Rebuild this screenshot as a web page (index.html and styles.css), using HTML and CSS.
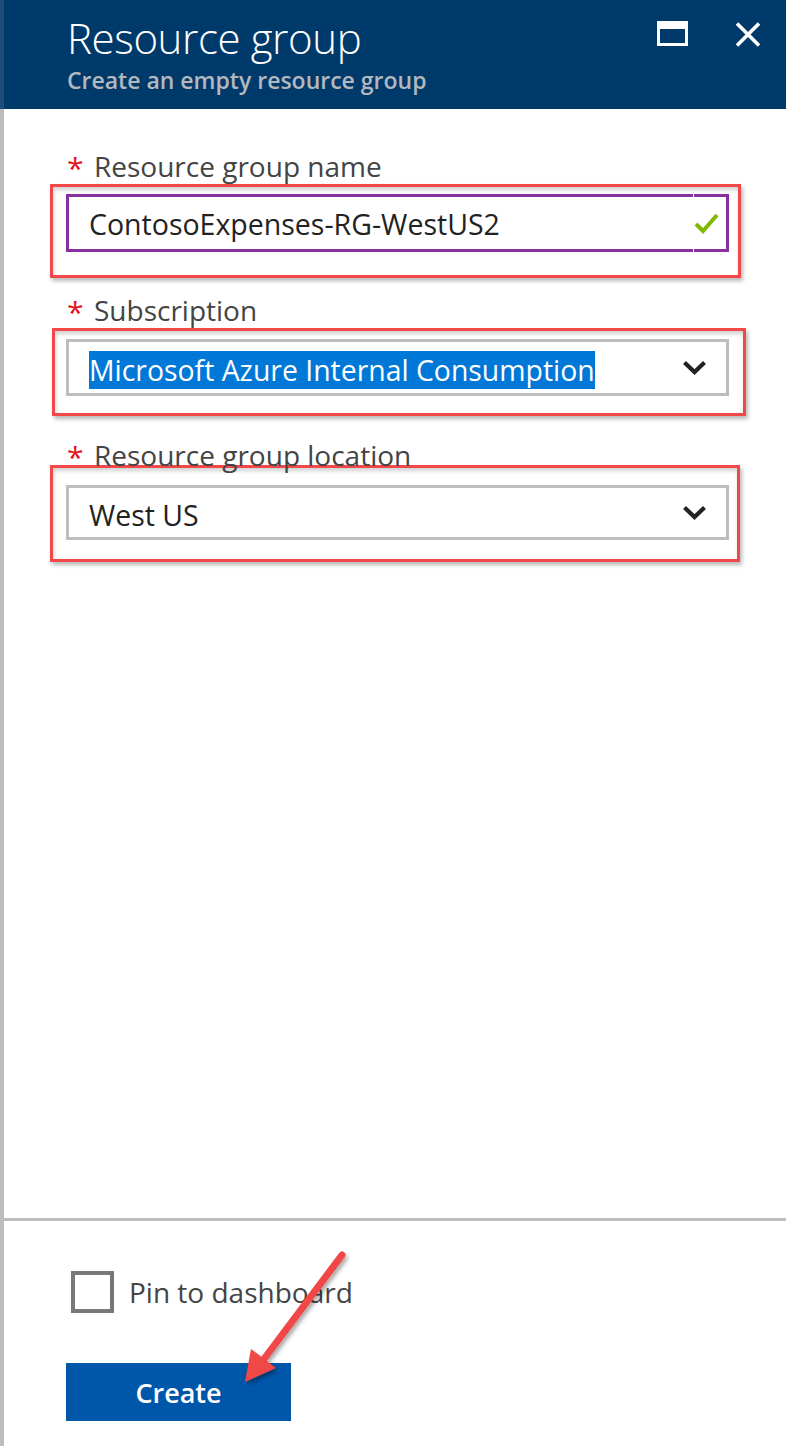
FILE: index.html
```html
<!DOCTYPE html>
<html lang="en">
<head>
<meta charset="utf-8">
<title>Resource group</title>
<link rel="stylesheet" href="styles.css">
</head>
<body>
<div class="blade">
  <header class="head">
    <div class="titles">
      <h1 class="title">Resource group</h1>
      <p class="subtitle">Create an empty resource group</p>
    </div>
    <div class="ctrls">
      <span class="maxbtn"></span>
      <svg class="closebtn" width="26" height="25" viewBox="0 0 26 25"><path d="M2 1.5 L24 23.5 M24 1.5 L2 23.5" stroke="#fff" stroke-width="3.6" fill="none"/></svg>
    </div>
  </header>
  <div class="content">
    <main class="form">
      <div class="label lbl1"><span class="req">*</span><span>Resource group name</span></div>
      <div class="hl hl1">
        <div class="input">
          <div class="inp-main">ContosoExpenses-RG-WestUS2</div>
          <div class="inp-check"><svg width="25" height="22" viewBox="0 0 25 22"><polyline points="2,12 9,19 23,3" fill="none" stroke="#7fba00" stroke-width="4"/></svg></div>
        </div>
      </div>
      <div class="label lbl2"><span class="req">*</span><span>Subscription</span></div>
      <div class="hl hl2">
        <div class="select"><span class="sel-text sel-hi">Microsoft Azure Internal Consumption</span>
          <svg class="chev" width="25" height="15" viewBox="0 0 25 15"><polyline points="2.5,2.5 12.5,12 22.5,2.5" fill="none" stroke="#222" stroke-width="4.2"/></svg>
        </div>
      </div>
      <div class="label lbl3"><span class="req">*</span><span>Resource group location</span></div>
      <div class="hl hl3">
        <div class="select sel3"><span class="sel-text">West US</span>
          <svg class="chev" width="25" height="15" viewBox="0 0 25 15"><polyline points="2.5,2.5 12.5,12 22.5,2.5" fill="none" stroke="#222" stroke-width="4.2"/></svg>
        </div>
      </div>
    </main>
    <footer class="foot">
      <label class="pin"><span class="cb"></span><span>Pin to dashboard</span></label>
      <button class="create">Create</button>
    </footer>
  </div>
  <svg class="arrow" width="140" height="160" viewBox="0 0 140 160">
    <defs>
      <filter id="sh" x="-30%" y="-30%" width="160%" height="160%">
        <feDropShadow dx="2" dy="3" stdDeviation="2" flood-color="#000" flood-opacity="0.35"/>
      </filter>
    </defs>
    <g filter="url(#sh)">
      <line x1="112" y1="15" x2="31" y2="123" stroke="#f04646" stroke-width="7" stroke-linecap="round"/>
      <polygon points="15,142 21,109 46,128" fill="#f04646"/>
    </g>
  </svg>
</div>
</body>
</html>
```
FILE: styles.css
```css
* { box-sizing: border-box; }
html, body { margin: 0; padding: 0; background: #fff; }
body { font-family: "Open Sans", "Noto Sans", sans-serif; color: #444; }

.blade {
  position: relative;
  width: 786px;
  height: 1446px;
  display: flex;
  flex-direction: column;
  overflow: hidden;
}

.head {
  height: 109px;
  flex: none;
  background: #003a6b;
  border-left: 4px solid #1f4d79;
  padding-left: 63px;
  display: flex;
  align-items: flex-start;
}
.titles { flex: 1; }
.title {
  margin: 17px 0 0;
  font-size: 42px;
  line-height: 42px;
  font-weight: 300;
  color: #fff;
  letter-spacing: -0.4px;
}
.subtitle {
  margin: 10px 0 0;
  font-size: 23px;
  line-height: 23px;
  font-weight: 600;
  color: #b3b8bf;
}
.ctrls {
  display: flex;
  align-items: flex-start;
  gap: 47px;
  padding: 21px 25px 0 0;
}
.maxbtn {
  display: block;
  width: 31px;
  height: 25px;
  border: 3.5px solid #fff;
  border-top-width: 8px;
}
.closebtn { display: block; margin-top: 1px; }

.content {
  flex: 1;
  display: flex;
  flex-direction: column;
  border-left: 4px solid #bdbdbd;
}
.form {
  flex: 1;
  padding: 42px 0 0 62px;
}
.label {
  height: 30px;
  line-height: 30px;
  font-size: 28px;
  color: #444;
  display: flex;
  align-items: baseline;
  white-space: nowrap;
}
.req {
  color: #e5121e;
  font-size: 30px;
  width: 28px;
  padding-left: 1px;
  position: relative;
  top: 2px;
}

.hl {
  border: 3px solid #f2484a;
  box-shadow: 2px 3px 4px rgba(0,0,0,0.28), inset 1px 3px 4px rgba(0,0,0,0.18);
}
.hl1 { margin: 3px 0 0 -16px; width: 691px; padding: 7px 9px 23px 13px; }
.lbl2 { margin-top: 17px; }
.hl2 { margin: 3px 0 0 -14px; width: 694px; padding: 8px 14px 17px 11px; }
.lbl3 { margin-top: 24px; }
.hl3 { margin: -5px 0 0 -16px; width: 690px; padding: 17px 8px 19px 13px; }

.input {
  display: flex;
  height: 58px;
}
.inp-main {
  flex: 1;
  border: 3px solid #8a2fa0;
  border-right: none;
  padding: 1px 0 0 20px;
  display: flex;
  align-items: center;
  font-size: 28.5px;
  color: #222;
  white-space: nowrap;
}
.inp-check {
  width: 35px;
  margin-left: 1px;
  border: 3px solid #8a2fa0;
  border-left: none;
  display: flex;
  align-items: center;
}

.select {
  height: 57px;
  border: 3px solid #bdbdbd;
  display: flex;
  align-items: center;
  justify-content: space-between;
  padding: 0 19px 0 20px;
}
.sel3 { height: 55px; }
.sel-text {
  font-size: 28.4px;
  color: #222;
  white-space: nowrap;
  position: relative;
  top: 2px;
}
.sel-hi {
  background: #0078d7;
  color: #fff;
}
.chev { display: block; }

.foot {
  flex: none;
  border-top: 3px solid #bdbdbd;
  padding: 50px 0 25px 62px;
  display: flex;
  flex-direction: column;
  align-items: flex-start;
  gap: 50px;
}
.pin {
  display: flex;
  align-items: center;
  height: 42px;
  font-size: 28px;
  color: #444;
}
.cb {
  width: 43px;
  height: 42px;
  border: 4px solid #787878;
  margin: 0 15px 0 5px;
}
.create {
  width: 225px;
  height: 58px;
  border: none;
  background: #0057aa;
  color: #fff;
  font-family: "Open Sans", "Noto Sans", sans-serif;
  font-size: 27px;
  font-weight: 600;
  padding: 0;
}

.arrow {
  position: absolute;
  left: 230px;
  top: 1240px;
  overflow: visible;
}
```
